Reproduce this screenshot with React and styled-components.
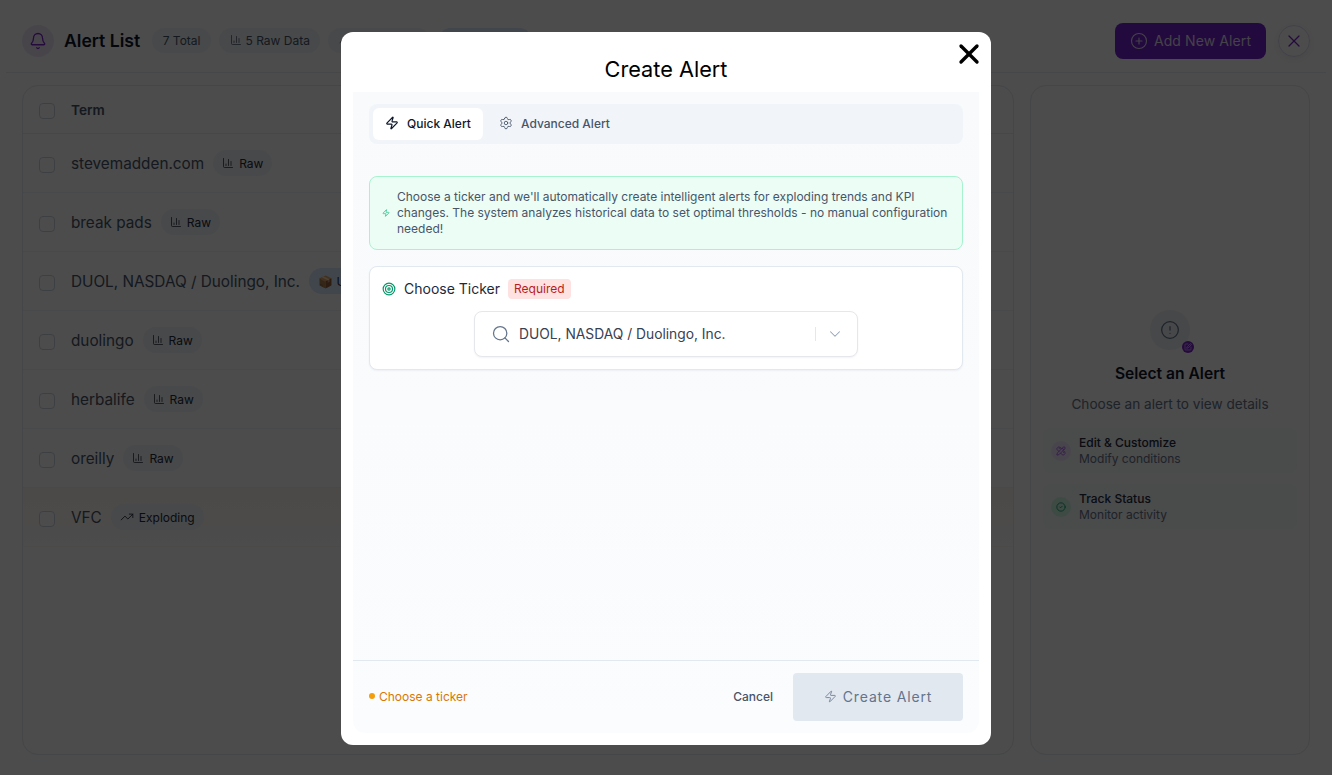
import React from "react";
import styled, { createGlobalStyle } from "styled-components";
import {
  Bell, ChartColumn, CirclePlus, X, Zap, Settings, Target, Search, ChevronDown,
  TrendingUp, CircleAlert, SquarePen, PencilRuler, CircleCheck,
} from "lucide-react";

const Global = createGlobalStyle`
  html, body { margin: 0; padding: 0; height: 100%; background: #fff; overflow: hidden; }
  body { font-family: Inter, "Liberation Sans", sans-serif; color: #111827; }
  * { box-sizing: border-box; }
`;

const Page = styled.div`
  width: 1332px;
  height: 775px;
  display: flex;
  flex-direction: column;
  background: #fdfdfe;
`;
const Header = styled.header`
  height: 73px;
  flex: none;
  margin: 0 6px;
  padding: 9px 16px 0;
  display: flex;
  align-items: center;
  border-bottom: 1px solid #e8edf3;
`;
const BellBadge = styled.div`
  width: 32px;
  height: 32px;
  border-radius: 50%;
  background: #eee8f8;
  color: #7c22ce;
  display: flex;
  align-items: center;
  justify-content: center;
  margin-right: 10px;
`;
const PageTitle = styled.h1`
  margin: 0 12px 0 0;
  font-size: 17.6px;
  line-height: 24px;
  font-weight: 600;
  color: #0f172a;
`;
const Pills = styled.div`
  display: flex;
  gap: 8px;
  flex: 1;
`;
const CountPill = styled.span`
  height: 25px;
  padding: 0 ${(p) => (p.$blue ? "14px" : "10.5px")} 1px;
  border-radius: 13px;
  background: ${(p) => (p.$blue ? "#dbeafe" : "#f1f5f9")};
  color: #475569;
  font-size: 12px;
  font-weight: 400;
  display: inline-flex;
  align-items: center;
  gap: 4px;
  white-space: nowrap;
`;
const AddButton = styled.button`
  width: 151px;
  height: 36px;
  border: 0;
  border-radius: 8px;
  background: #7322d0;
  font: 400 14px Inter, sans-serif;
  letter-spacing: 0.1px;
  display: flex;
  align-items: center;
  justify-content: center;
  gap: 6px;
  margin-right: 12px;
  color: #e6dcf2;
`;
const CloseRound = styled.button`
  width: 32px;
  height: 32px;
  border-radius: 50%;
  border: 1px solid #e3dcf3;
  background: #fdfdfe;
  color: #7c22ce;
  display: flex;
  align-items: center;
  justify-content: center;
  padding: 0;
  box-shadow: 0 2px 6px rgba(15, 23, 42, 0.05);
`;
const Main = styled.main`
  flex: 1;
  padding: 12px 22px 20px;
  display: flex;
  gap: 16px;
`;
const ListPanel = styled.section`
  width: 992px;
  border: 1px solid #e5eaf1;
  border-radius: 16px;
  overflow: hidden;
`;
const Row = styled.div`
  height: ${(p) => (p.$head ? "48px" : "59px")};
  padding-left: 16px;
  display: flex;
  align-items: center;
  border-bottom: 1px solid ${(p) => (p.$head ? "#e9edf3" : p.$last ? "transparent" : "#f1f4f8")};
  background: ${(p) => (p.$hot ? "linear-gradient(180deg,#fff8f0,#fdfdfe)" : "transparent")};
`;
const Check = styled.span`
  width: 16px;
  height: 16px;
  flex: none;
  border: 1px solid #cbd5e1;
  border-radius: 4px;
  margin: ${(p) => (p.$head ? "2px" : "4px")} 16px 0 0;
  background: #fff;
`;
const HeadLabel = styled.span`
  font-size: 13.6px;
  font-weight: 600;
  color: #475569;
`;
const TermName = styled.span`
  font-size: 15.3px;
  color: #475569;
  white-space: nowrap;
  margin-right: 9px;
`;
const TypePill = styled.span`
  height: 26px;
  padding: 0 9px;
  border-radius: 13px;
  background: ${(p) => (p.$blue ? "#dbeafe" : "#f1f5f9")};
  color: #1f2937;
  font-size: 12px;
  font-weight: 400;
  display: inline-flex;
  align-items: center;
  gap: 5px;
`;
const SidePanel = styled.aside`
  width: 280px;
  border: 1px solid #e5eaf1;
  border-radius: 16px;
  padding: 224px 12px 0;
  display: flex;
  flex-direction: column;
  align-items: center;
`;
const EmptyIcon = styled.div`
  position: relative;
  width: 40px;
  height: 40px;
  border-radius: 50%;
  background: #eef1f5;
  color: #64748b;
  display: flex;
  align-items: center;
  justify-content: center;
`;
const MiniBadge = styled.span`
  position: absolute;
  right: -4px;
  bottom: -3px;
  width: 12px;
  height: 12px;
  border-radius: 50%;
  background: #7c22ce;
  color: #e9d5ff;
  display: flex;
  align-items: center;
  justify-content: center;
`;
const SideTitle = styled.h2`
  margin: 12px 0 0;
  font-size: 15.6px;
  line-height: 24px;
  font-weight: 600;
  color: #0f172a;
`;
const SideText = styled.p`
  margin: 8px 0 0;
  font-size: 13.6px;
  line-height: 20px;
  color: #64748b;
`;
const Features = styled.div`
  width: 100%;
  margin-top: 14px;
  display: flex;
  flex-direction: column;
  gap: 11px;
`;
const Feature = styled.div`
  height: 45px;
  padding: 0 8px;
  border-radius: 8px;
  background: #f8fafc;
  display: flex;
  align-items: center;
  gap: 8px;
`;
const FeatureIcon = styled.span`
  width: 20px;
  height: 20px;
  border-radius: 50%;
  flex: none;
  display: flex;
  align-items: center;
  justify-content: center;
  background: ${(p) => p.$bg};
  color: ${(p) => p.$fg};
`;
const FeatureTitle = styled.div`
  font-size: 12px;
  line-height: 16px;
  font-weight: 500;
  color: #1e293b;
`;
const FeatureSub = styled.div`
  font-size: 12px;
  line-height: 16px;
  color: #64748b;
`;

const Overlay = styled.div`
  position: fixed;
  inset: 0;
  background: rgba(0, 0, 0, 0.7);
  display: flex;
  justify-content: center;
  align-items: flex-start;
  padding-top: 32px;
`;
const Modal = styled.div`
  position: relative;
  width: 650px;
  height: 713px;
  background: #fff;
  border-radius: 12px;
  padding: 0 12px 12px;
  display: flex;
  flex-direction: column;
`;
const ModalTitle = styled.h2`
  margin: 0;
  height: 60px;
  padding-top: 21px;
  text-align: center;
  font-size: 21.7px;
  line-height: 32px;
  font-weight: 400;
  color: #000;
  flex: none;
`;
const ModalClose = styled.button`
  position: absolute;
  top: 6px;
  right: 6px;
  width: 32px;
  height: 32px;
  border: 0;
  padding: 0;
  background: transparent;
  color: #000;
  display: flex;
  align-items: center;
  justify-content: center;
`;
const ModalBody = styled.div`
  flex: 1;
  display: flex;
  flex-direction: column;
  background: linear-gradient(180deg, #f8fafc 0%, #fbfcfe 100%);
  border-radius: 0 0 12px 12px;
`;
const Scroll = styled.div`
  flex: 1;
  padding: 12px 16px 0;
  display: flex;
  flex-direction: column;
`;
const Tabs = styled.div`
  height: 40px;
  padding: 4px;
  border-radius: 8px;
  background: #f1f5f9;
  display: flex;
  gap: 4px;
`;
const Tab = styled.div`
  height: 32px;
  width: ${(p) => (p.$active ? "110px" : "auto")};
  padding: 0 12px 2px;
  border-radius: 6px;
  background: ${(p) => (p.$active ? "#fff" : "transparent")};
  color: ${(p) => (p.$active ? "#0f172a" : "#475569")};
  font-size: 12px;
  font-weight: 500;
  display: flex;
  align-items: center;
  gap: 8px;
`;
const Notice = styled.div`
  margin-top: 32px;
  height: 74px;
  padding: 0 10px 0 12px;
  border: 1px solid #a7f3d0;
  border-radius: 8px;
  background: #ecfdf5;
  display: flex;
  align-items: center;
  gap: 7px;
  color: #475569;
  font-size: 12px;
  line-height: 16px;
  svg { flex: none; color: #10b981; }
`;
const TickerCard = styled.div`
  margin-top: 16px;
  height: 104px;
  border: 1px solid #e2e8f0;
  border-radius: 8px;
  background: #fff;
  padding: 12px;
  box-shadow: 0 1px 2px rgba(15, 23, 42, 0.05);
`;
const TickerHead = styled.div`
  height: 20px;
  display: flex;
  align-items: center;
  color: #1e293b;
  font-size: 14px;
  font-weight: 400;
  svg { color: #059669; margin-right: 8px; }
`;
const TickerLabel = styled.span`
  margin-bottom: 1px;
`;
const Required = styled.span`
  margin-left: 8px;
  height: 20px;
  padding: 0 6px 1px;
  border-radius: 4px;
  background: #fee2e2;
  color: #b91c1c;
  font-size: 12px;
  font-weight: 400;
  display: flex;
  align-items: center;
`;
const SelectBox = styled.div`
  width: 384px;
  height: 46px;
  margin: 12px auto 0;
  border: 1px solid #e5e7eb;
  border-radius: 8px;
  background: #fff;
  box-shadow: 0 1px 2px rgba(15, 23, 42, 0.05);
  padding: 0 13px 0 16px;
  display: flex;
  align-items: center;
  color: #374151;
  font-size: 13.8px;
  font-weight: 400;
`;
const SelectValue = styled.span`
  flex: 1;
  margin: 0 0 1px 8px;
`;
const Divider = styled.span`
  width: 1px;
  height: 14px;
  background: #e2e8f0;
  margin-right: 10px;
`;
const Footer = styled.div`
  height: 73px;
  flex: none;
  border-top: 1px solid #e2e8f0;
  padding: 0 16px;
  display: flex;
  align-items: center;
`;
const Hint = styled.span`
  flex: 1;
  color: #d97706;
  font-size: 12px;
  padding-bottom: 2px;
  display: flex;
  align-items: center;
  gap: 4px;
`;
const Dot = styled.i`
  width: 6px;
  height: 6px;
  border-radius: 50%;
  background: #f59e0b;
`;
const Cancel = styled.button`
  border: 0;
  background: transparent;
  padding: 0 0 2px;
  margin-right: 20px;
  color: #475569;
  font: 500 12px Inter, sans-serif;
`;
const Create = styled.button`
  width: 170px;
  height: 48px;
  border: 0;
  border-radius: 4px;
  background: #e2e8f0;
  color: #64748b;
  font: 400 14px Inter, sans-serif;
  letter-spacing: 0.85px;
  padding-bottom: 2px;
  display: flex;
  align-items: center;
  justify-content: center;
  gap: 6px;
`;

const terms = [
  { name: "stevemadden.com", type: "Raw" },
  { name: "break pads", type: "Raw" },
  { name: "DUOL, NASDAQ / Duolingo, Inc.", type: "Upcoming" },
  { name: "duolingo", type: "Raw" },
  { name: "herbalife", type: "Raw" },
  { name: "oreilly", type: "Raw" },
  { name: "VFC", type: "Exploding" },
];

function TermType({ type }) {
  if (type === "Upcoming") return <TypePill $blue>📦 Upcoming</TypePill>;
  if (type === "Exploding")
    return <TypePill><TrendingUp size={14} strokeWidth={1.5} />Exploding</TypePill>;
  return <TypePill><ChartColumn size={12} strokeWidth={1.5} />Raw</TypePill>;
}

export default function App() {
  return (
    <>
      <Global />
      <Page>
        <Header>
          <BellBadge><Bell size={18} strokeWidth={1.7} /></BellBadge>
          <PageTitle>Alert List</PageTitle>
          <Pills>
            <CountPill>7 Total</CountPill>
            <CountPill><ChartColumn size={12} strokeWidth={1.5} />5 Raw Data</CountPill>
            <CountPill><TrendingUp size={12} />1 Exploding</CountPill>
            <CountPill $blue>1 Upcoming</CountPill>
          </Pills>
          <AddButton><CirclePlus size={18} strokeWidth={1.5} />Add New Alert</AddButton>
          <CloseRound><X size={20} strokeWidth={1.5} /></CloseRound>
        </Header>
        <Main>
          <ListPanel>
            <Row $head><Check $head /><HeadLabel>Term</HeadLabel></Row>
            {terms.map((t) => (
              <Row key={t.name} $hot={t.name === "VFC"} $last={t.name === "VFC"}>
                <Check />
                <TermName>{t.name}</TermName>
                <TermType type={t.type} />
              </Row>
            ))}
          </ListPanel>
          <SidePanel>
            <EmptyIcon>
              <CircleAlert size={20} strokeWidth={1.5} />
              <MiniBadge><SquarePen size={8} /></MiniBadge>
            </EmptyIcon>
            <SideTitle>Select an Alert</SideTitle>
            <SideText>Choose an alert to view details</SideText>
            <Features>
              <Feature>
                <FeatureIcon $bg="#f3e8ff" $fg="#a855f7"><PencilRuler size={10} /></FeatureIcon>
                <div>
                  <FeatureTitle>Edit &amp; Customize</FeatureTitle>
                  <FeatureSub>Modify conditions</FeatureSub>
                </div>
              </Feature>
              <Feature>
                <FeatureIcon $bg="#d1fae5" $fg="#059669"><CircleCheck size={10} /></FeatureIcon>
                <div>
                  <FeatureTitle>Track Status</FeatureTitle>
                  <FeatureSub>Monitor activity</FeatureSub>
                </div>
              </Feature>
            </Features>
          </SidePanel>
        </Main>
      </Page>
      <Overlay>
        <Modal>
          <ModalTitle>Create Alert</ModalTitle>
          <ModalClose><X size={32} strokeWidth={2.5} /></ModalClose>
          <ModalBody>
            <Scroll>
              <Tabs>
                <Tab $active><Zap size={14} strokeWidth={2} />Quick Alert</Tab>
                <Tab><Settings size={14} strokeWidth={1.5} />Advanced Alert</Tab>
              </Tabs>
              <Notice>
                <Zap size={8} />
                <span>Choose a ticker and we'll automatically create intelligent alerts for exploding trends and KPI changes. The system analyzes historical data to set optimal thresholds - no manual configuration needed!</span>
              </Notice>
              <TickerCard>
                <TickerHead>
                  <Target size={14} strokeWidth={2} />
                  <TickerLabel>Choose Ticker</TickerLabel>
                  <Required>Required</Required>
                </TickerHead>
                <SelectBox>
                  <Search size={20} strokeWidth={1.5} color="#64748b" />
                  <SelectValue>DUOL, NASDAQ / Duolingo, Inc.</SelectValue>
                  <Divider />
                  <ChevronDown size={18} strokeWidth={1.4} color="#94a3b8" />
                </SelectBox>
              </TickerCard>
            </Scroll>
            <Footer>
              <Hint><Dot />Choose a ticker</Hint>
              <Cancel>Cancel</Cancel>
              <Create><Zap size={13} strokeWidth={1.5} />Create Alert</Create>
            </Footer>
          </ModalBody>
        </Modal>
      </Overlay>
    </>
  );
}
